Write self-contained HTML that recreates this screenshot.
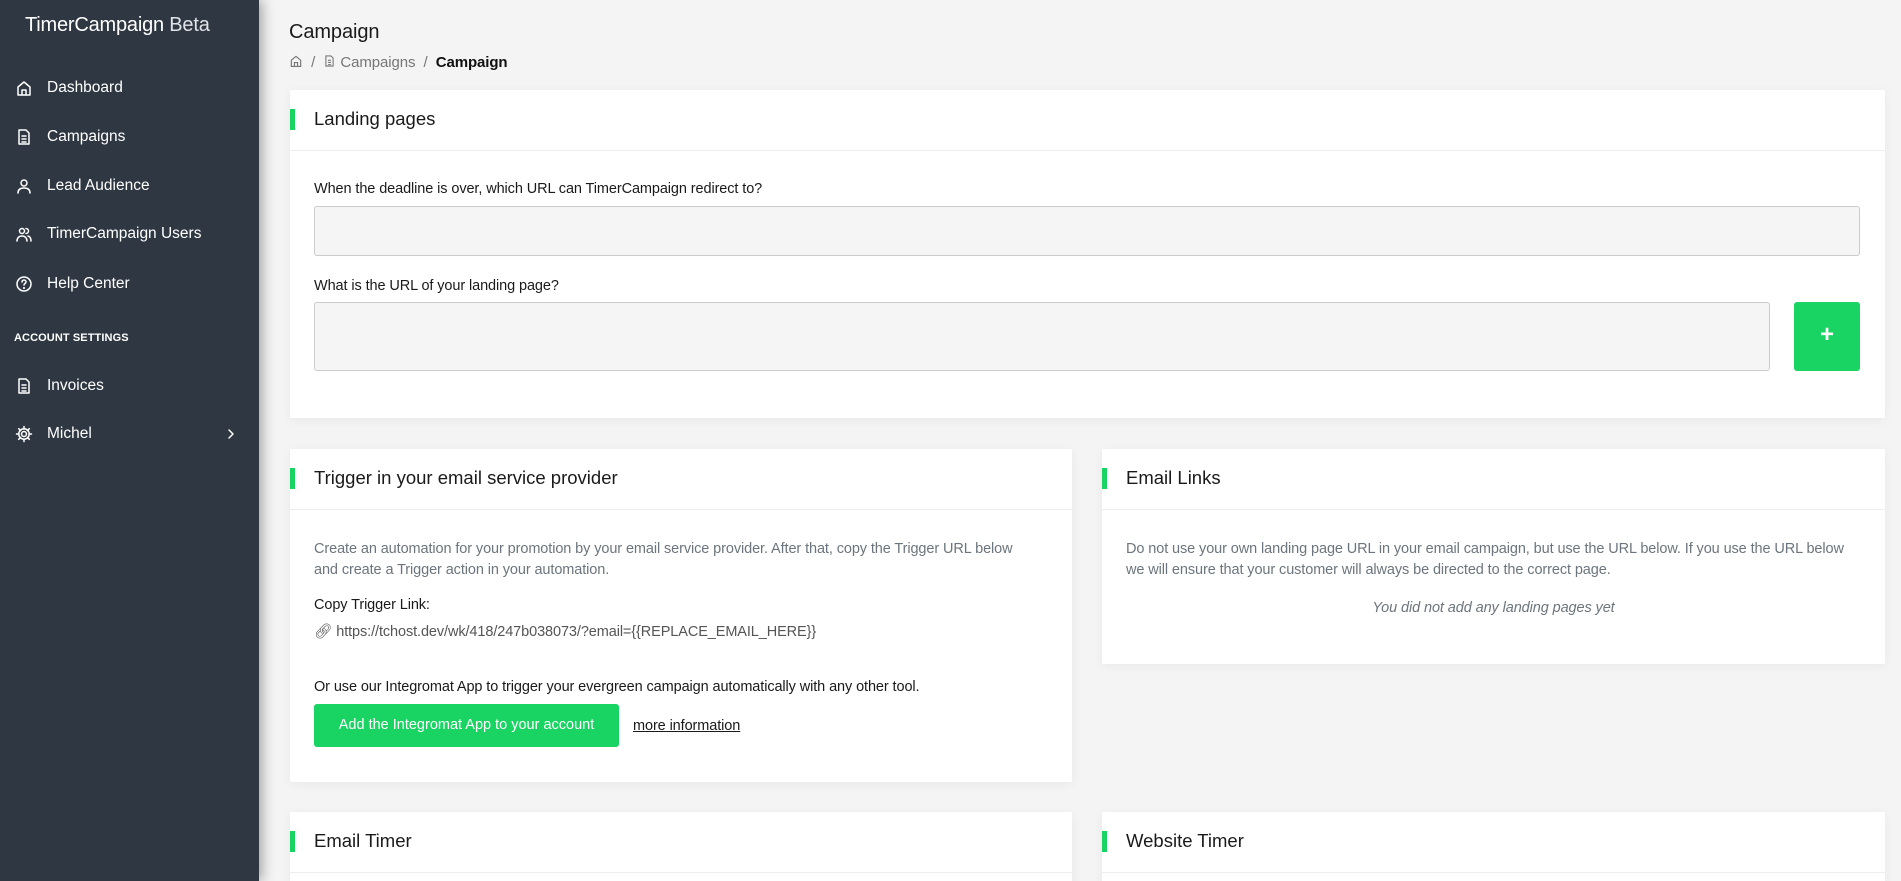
<!DOCTYPE html>
<html><head><meta charset="utf-8">
<style>
*{box-sizing:border-box;margin:0;padding:0}
html,body{width:1901px;height:881px;overflow:hidden}
body{background:#f4f4f4;font-family:"Liberation Sans",sans-serif;color:#1a1a1a;position:relative}
.side{position:absolute;left:0;top:0;width:259px;height:881px;background:#2f3842;box-shadow:3px 0 12px rgba(0,0,0,.35);z-index:2;color:#fff}
.brand{position:absolute;left:25px;top:14px;font-size:20px;letter-spacing:-.2px}
.brand span{color:#dfe3e7}
.mi{position:absolute;left:0;width:259px;height:24px;font-size:15.5px;line-height:24px}
.mi svg{position:absolute;left:15px;top:3px;width:18px;height:18px;fill:none;stroke:#fff;stroke-width:1.5;stroke-linecap:round;stroke-linejoin:round}
.mi span{position:absolute;left:47px}
.sec{position:absolute;left:14px;top:332px;font-size:11px;font-weight:bold;letter-spacing:.1px}
.card{position:absolute;background:#fff;box-shadow:0 2px 10px rgba(0,0,0,.05)}
.ch{position:absolute;left:0;right:0;top:0;height:61px;border-bottom:1px solid #eee}
.ch:before{content:"";position:absolute;left:0;top:19px;width:5px;height:21px;background:#19d462}
.ch div{position:absolute;left:24px;top:16px;font-size:18.5px;line-height:26px}
.t{position:absolute;font-size:14.5px;line-height:21px;letter-spacing:-.1px}
.g{color:#6c757d}
.inp{position:absolute;background:#f5f5f5;border:1px solid #ccc;border-radius:3px}
</style></head><body>
<div class="side">
 <div class="brand">TimerCampaign <span>Beta</span></div>
 <div class="mi" style="top:76px"><svg viewBox="0 0 18 18"><path d="M3 8L9 3l6 5v8H3z"/><path d="M7 16v-5h4v5"/></svg><span>Dashboard</span></div>
 <div class="mi" style="top:125px"><svg viewBox="0 0 18 18"><path d="M4 2h7l3 3v11H4z"/><path d="M7 8h4M7 11h4M7 14h4"/></svg><span>Campaigns</span></div>
 <div class="mi" style="top:174px"><svg viewBox="0 0 18 18"><circle cx="9" cy="6" r="3"/><path d="M3 16c0-4 3-5 6-5s6 1 6 5"/></svg><span>Lead Audience</span></div>
 <div class="mi" style="top:222px"><svg viewBox="0 0 18 18"><circle cx="7" cy="6" r="2.5"/><path d="M2 16c0-3 2-5 5-5s5 2 5 5"/><path d="M11 3.5a2.5 2.5 0 010 5M13 11c2 .5 3 2 3 5"/></svg><span>TimerCampaign Users</span></div>
 <div class="mi" style="top:272px"><svg viewBox="0 0 18 18"><circle cx="9" cy="9" r="7"/><path d="M7 7a2 2 0 114 0c0 1.5-2 1.5-2 3"/><circle cx="9" cy="13" r=".4"/></svg><span>Help Center</span></div>
 <div class="sec">ACCOUNT SETTINGS</div>
 <div class="mi" style="top:374px"><svg viewBox="0 0 18 18"><path d="M4 2h7l3 3v11H4z"/><path d="M7 8h4M7 11h4M7 14h4"/></svg><span>Invoices</span></div>
 <div class="mi" style="top:422px"><svg viewBox="0 0 18 18"><circle cx="9" cy="9" r="2.5"/><path d="M9 1.5v2.5M9 14v2.5M1.5 9H4M14 9h2.5M3.7 3.7l1.8 1.8M12.5 12.5l1.8 1.8M3.7 14.3l1.8-1.8M12.5 5.5l1.8-1.8"/><circle cx="9" cy="9" r="5.2"/></svg><span>Michel</span><svg viewBox="0 0 18 18" style="left:222px"><path d="M7 5l4 4-4 4"/></svg></div>
</div>

<div class="t" style="left:289px;top:19px;font-size:20px;line-height:26px">Campaign</div>
<div class="t" style="left:289px;top:52px;font-size:15px;color:#777">
 <svg width="14" height="14" viewBox="0 0 18 18" style="vertical-align:-1px;fill:none;stroke:#777;stroke-width:1.5"><path d="M3 8L9 3l6 5v8H3z"/><path d="M7 16v-5h4v5"/></svg>
 &nbsp;/&nbsp; <svg width="13" height="14" viewBox="0 0 18 18" style="vertical-align:-1px;fill:none;stroke:#777;stroke-width:1.5"><path d="M4 2h7l3 3v11H4z"/><path d="M7 8h4M7 11h4M7 14h4"/></svg> Campaigns &nbsp;/&nbsp; <b style="color:#111">Campaign</b></div>

<div class="card" style="left:290px;top:90px;width:1595px;height:328px">
 <div class="ch"><div>Landing pages</div></div>
 <div class="t" style="left:24px;top:89px">When the deadline is over, which URL can TimerCampaign redirect to?</div>
 <div class="inp" style="left:24px;top:116px;width:1546px;height:50px"></div>
 <div class="t" style="left:24px;top:186px">What is the URL of your landing page?</div>
 <div class="inp" style="left:24px;top:212px;width:1456px;height:69px"></div>
 <div style="position:absolute;left:1504px;top:212px;width:66px;height:69px;background:#19d462;border-radius:3px;color:#fff;font-size:24px;font-weight:bold;text-align:center;line-height:66px">+</div>
</div>

<div class="card" style="left:290px;top:449px;width:782px;height:333px">
 <div class="ch"><div>Trigger in your email service provider</div></div>
 <div class="t g" style="left:24px;top:90px;width:722px">Create an automation for your promotion by your email service provider. After that, copy the Trigger URL below and create a Trigger action in your automation.</div>
 <div class="t" style="left:24px;top:146px">Copy Trigger Link:</div>
 <div class="t" style="left:24px;top:173px;color:#555">&#128279;&#xFE0E; https://tchost.dev/wk/418/247b038073/?email={{REPLACE_EMAIL_HERE}}</div>
 <div class="t" style="left:24px;top:228px">Or use our Integromat App to trigger your evergreen campaign automatically with any other tool.</div>
 <div style="position:absolute;left:24px;top:255px;width:305px;height:43px;background:#19d462;border-radius:3px;color:#fff;font-size:14.5px;line-height:43px;text-align:center">Add the Integromat App to your account</div>
 <div class="t" style="left:343px;top:267px;text-decoration:underline">more information</div>
</div>

<div class="card" style="left:1102px;top:449px;width:783px;height:215px">
 <div class="ch"><div>Email Links</div></div>
 <div class="t g" style="left:24px;top:90px;width:738px">Do not use your own landing page URL in your email campaign, but use the URL below. If you use the URL below we will ensure that your customer will always be directed to the correct page.</div>
 <div class="t g" style="left:0;width:783px;text-align:center;top:149px;font-style:italic">You did not add any landing pages yet</div>
</div>

<div class="card" style="left:290px;top:812px;width:782px;height:80px">
 <div class="ch"><div>Email Timer</div></div>
</div>
<div class="card" style="left:1102px;top:812px;width:783px;height:80px">
 <div class="ch"><div>Website Timer</div></div>
</div>
</body></html>
